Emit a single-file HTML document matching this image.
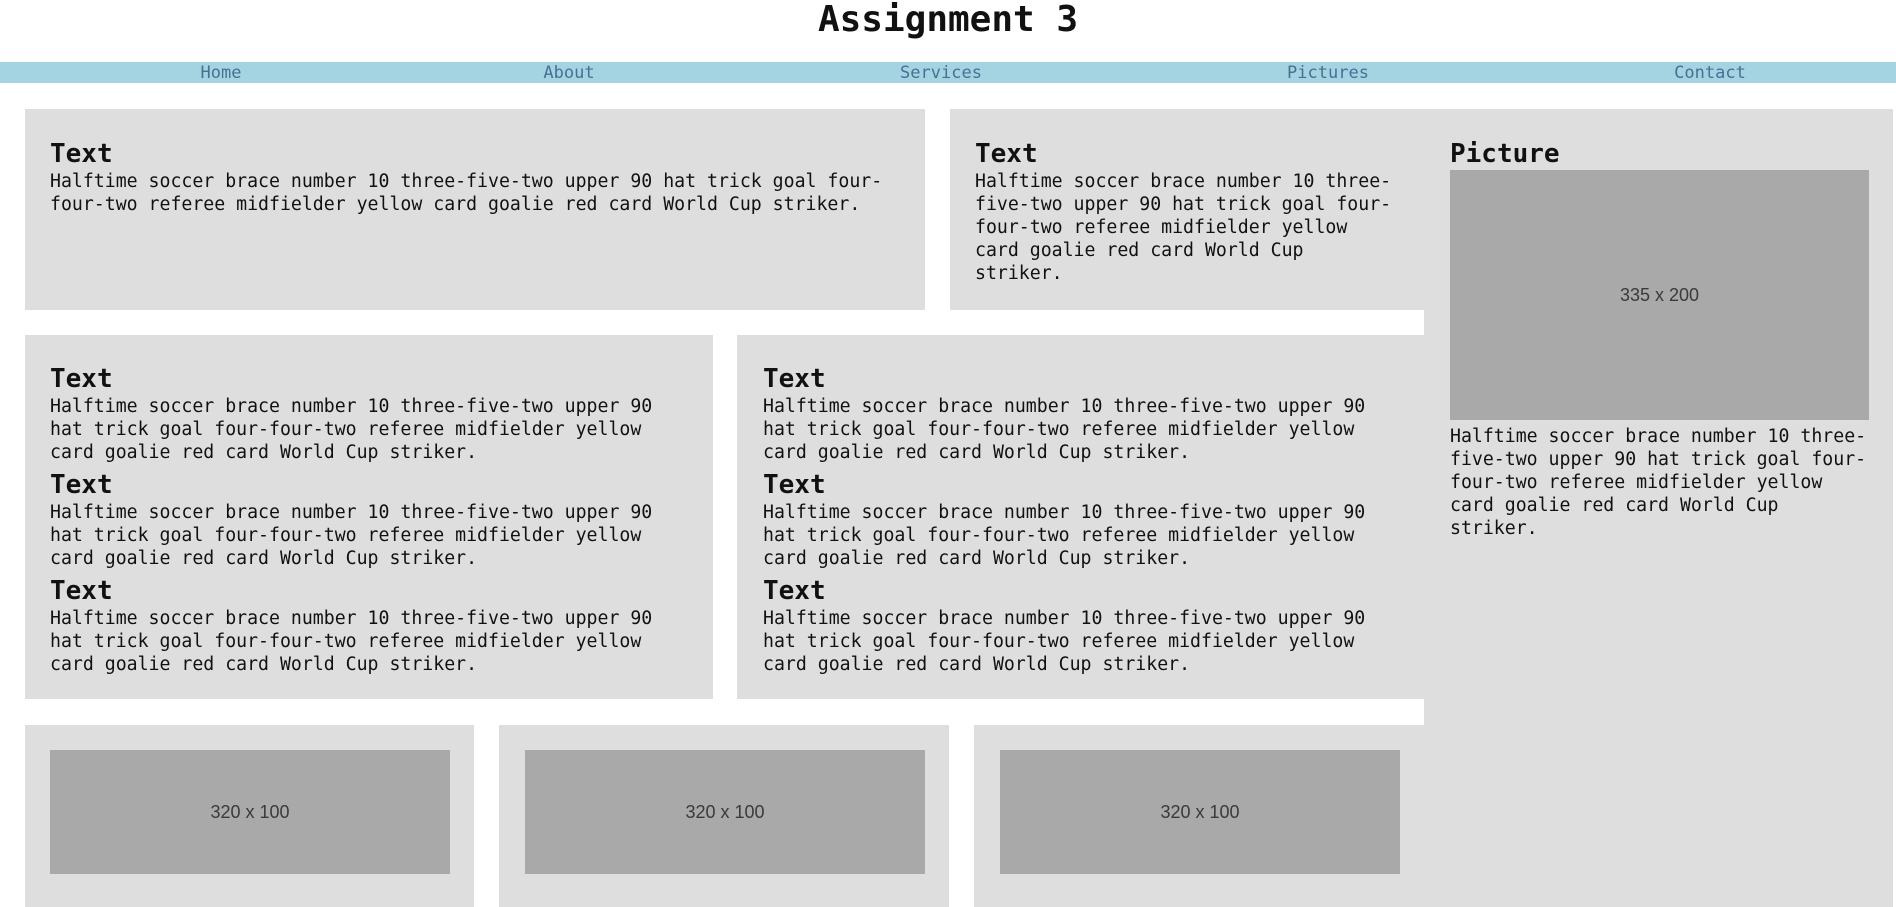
<!DOCTYPE html>
<html><head><meta charset="utf-8"><style>
*{margin:0;padding:0;box-sizing:border-box}
html,body{width:1896px;height:907px;overflow:hidden;background:#fff;font-family:"DejaVu Sans Mono","Liberation Mono",monospace;color:#111}
h1{position:absolute;left:0;width:1896px;top:1px;text-align:center;font-size:36px;line-height:38px;font-weight:bold}
.nav{position:absolute;left:0;top:62px;width:1896px;height:21px;background:#a4d4e2}
.nav span{position:absolute;top:1px;line-height:21px;font-size:17px;color:#4a6f93;transform:translateX(-50%)}
.box{position:absolute;background:#dedede}
.c{position:absolute;font-size:18.2px;line-height:23px;white-space:nowrap}
.c b{display:block;font-size:26px;line-height:32px;margin-bottom:0}
.c b.s{margin-top:5px}
.ph{position:absolute;background:#a9a9a9;display:flex;align-items:center;justify-content:center;font-family:"Liberation Sans",sans-serif;font-size:18px;color:#3a3a3a}
</style></head><body>
<h1>Assignment 3</h1>
<div class="nav"><span style="left:221px">Home</span><span style="left:569px">About</span><span style="left:941px">Services</span><span style="left:1328px">Pictures</span><span style="left:1710px">Contact</span></div>

<div class="box" style="left:25px;top:109px;width:900px;height:201px"></div>
<div class="box" style="left:950px;top:109px;width:943px;height:201px"></div>
<div class="box" style="left:1424px;top:109px;width:469px;height:798px"></div>
<div class="box" style="left:25px;top:335px;width:688px;height:364px"></div>
<div class="box" style="left:737px;top:335px;width:687px;height:364px"></div>
<div class="box" style="left:25px;top:725px;width:449px;height:182px"></div>
<div class="box" style="left:499px;top:725px;width:450px;height:182px"></div>
<div class="box" style="left:974px;top:725px;width:450px;height:182px"></div>

<div class="c" style="left:50px;top:138px"><b>Text</b>Halftime soccer brace number 10 three-five-two upper 90 hat trick goal four-<br>four-two referee midfielder yellow card goalie red card World Cup striker.</div>
<div class="c" style="left:975px;top:138px"><b>Text</b>Halftime soccer brace number 10 three-<br>five-two upper 90 hat trick goal four-<br>four-two referee midfielder yellow<br>card goalie red card World Cup<br>striker.</div>
<div class="c" style="left:1450px;top:138px"><b>Picture</b></div>
<div class="ph" style="left:1450px;top:170px;width:419px;height:250px">335 x 200</div>
<div class="c" style="left:1450px;top:425px">Halftime soccer brace number 10 three-<br>five-two upper 90 hat trick goal four-<br>four-two referee midfielder yellow<br>card goalie red card World Cup<br>striker.</div>

<div class="c" style="left:50px;top:363px"><b>Text</b>Halftime soccer brace number 10 three-five-two upper 90<br>hat trick goal four-four-two referee midfielder yellow<br>card goalie red card World Cup striker.<b class="s">Text</b>Halftime soccer brace number 10 three-five-two upper 90<br>hat trick goal four-four-two referee midfielder yellow<br>card goalie red card World Cup striker.<b class="s">Text</b>Halftime soccer brace number 10 three-five-two upper 90<br>hat trick goal four-four-two referee midfielder yellow<br>card goalie red card World Cup striker.</div>
<div class="c" style="left:763px;top:363px"><b>Text</b>Halftime soccer brace number 10 three-five-two upper 90<br>hat trick goal four-four-two referee midfielder yellow<br>card goalie red card World Cup striker.<b class="s">Text</b>Halftime soccer brace number 10 three-five-two upper 90<br>hat trick goal four-four-two referee midfielder yellow<br>card goalie red card World Cup striker.<b class="s">Text</b>Halftime soccer brace number 10 three-five-two upper 90<br>hat trick goal four-four-two referee midfielder yellow<br>card goalie red card World Cup striker.</div>

<div class="ph" style="left:50px;top:750px;width:400px;height:124px">320 x 100</div>
<div class="ph" style="left:525px;top:750px;width:400px;height:124px">320 x 100</div>
<div class="ph" style="left:1000px;top:750px;width:400px;height:124px">320 x 100</div>
</body></html>
